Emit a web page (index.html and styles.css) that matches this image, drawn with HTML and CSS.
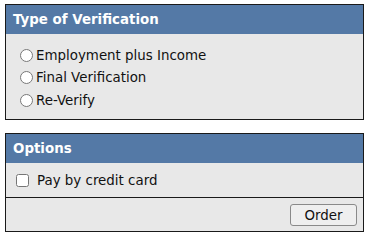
FILE: index.html
```html
<!DOCTYPE html>
<html lang="en">
<head>
  <meta charset="UTF-8">
  <title>Order verification</title>
  <link rel="stylesheet" href="styles.css">
</head>
<body>
  <div class="panel">
    <div class="panel-head">Type of Verification</div>
    <div class="panel-body choices">
      <label class="choice"><input type="radio" name="vtype"><span>Employment plus Income</span></label>
      <label class="choice"><input type="radio" name="vtype"><span>Final Verification</span></label>
      <label class="choice"><input type="radio" name="vtype"><span>Re-Verify</span></label>
    </div>
  </div>

  <div class="panel">
    <div class="panel-head">Options</div>
    <div class="panel-body options">
      <label class="check"><input type="checkbox"><span>Pay by credit card</span></label>
    </div>
    <div class="panel-foot">
      <button type="button" class="btn">Order</button>
    </div>
  </div>
</body>
</html>
```

FILE: styles.css
```css
body {
  margin: 4px 5px 0 5px;
  width: 359px;
  font-family: "DejaVu Sans", Verdana, sans-serif;
  font-size: 13.4px;
  color: #111;
  background: #fff;
}

.panel {
  border: 1px solid #1a1a1a;
  background: #e8e8e8;
  margin-bottom: 13px;
}

.panel:last-child {
  margin-bottom: 0;
}

.panel-head {
  height: 29px;
  line-height: 30px;
  padding: 0 7px;
  background: #5479a6;
  color: #fff;
  font-weight: bold;
  font-size: 13.4px;
}

.choices {
  height: 85px;
  box-sizing: border-box;
  padding: 10px 0 0 14px;
  display: flex;
  flex-direction: column;
}

.choice {
  height: 22.5px;
  display: flex;
  align-items: center;
}

.choice input {
  margin: 0 3px 0 0;
  width: 13px;
  height: 13px;
}

.options {
  height: 34px;
  box-sizing: border-box;
  padding-left: 10px;
  display: flex;
  align-items: center;
}

.check {
  display: flex;
  align-items: center;
}

.check input {
  margin: 0 8px 0 0;
  width: 13px;
  height: 13px;
}

.panel-foot {
  border-top: 1px solid #1a1a1a;
  height: 34px;
  box-sizing: border-box;
  padding: 6px;
  display: flex;
  justify-content: flex-end;
  align-items: flex-start;
}

.btn {
  width: 67px;
  height: 22px;
  padding: 0;
  font-family: "DejaVu Sans", Verdana, sans-serif;
  font-size: 13.4px;
  color: #111;
  background: #efefef;
  border: 1px solid #8a8a8a;
  border-radius: 3px;
}
```
